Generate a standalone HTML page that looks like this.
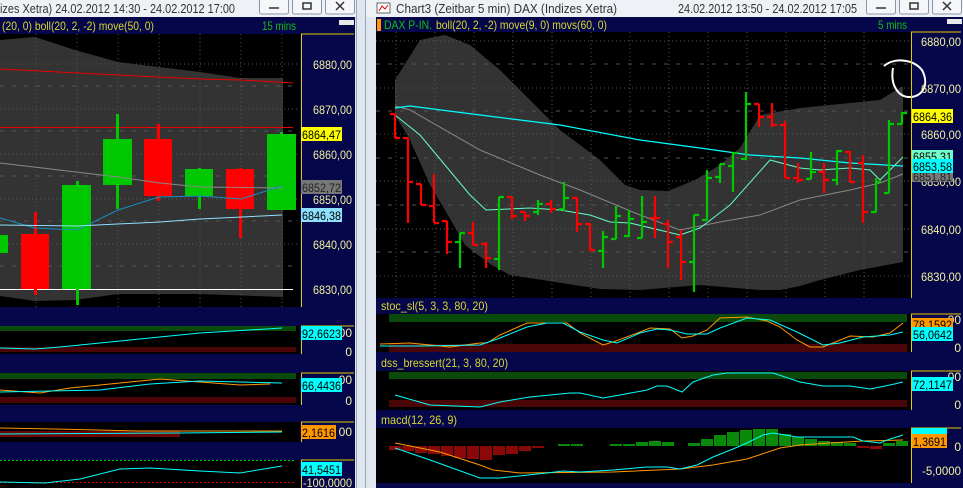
<!DOCTYPE html>
<html><head><meta charset="utf-8"><style>
html,body{margin:0;padding:0;background:#dde5ee;}
svg{display:block;font-family:"Liberation Sans",sans-serif;}
</style></head><body>
<svg width="963" height="488" viewBox="0 0 963 488" xmlns="http://www.w3.org/2000/svg">
<rect x="0" y="0" width="963" height="488" fill="#dfe6ef"/>
<rect x="0" y="0" width="356" height="17" fill="#eef2f7"/>
<rect x="366" y="0" width="597" height="17" fill="#eef2f7"/>
<line x1="356.5" y1="0" x2="356.5" y2="488" stroke="#9aa6b5"/>
<line x1="365.5" y1="0" x2="365.5" y2="488" stroke="#9aa6b5"/>
<text x="0" y="13" font-size="12.5" fill="#333" textLength="235" lengthAdjust="spacingAndGlyphs">izes Xetra) 24.02.2012 14:30 - 24.02.2012 17:00</text>
<g fill="#f4f6f9" stroke="#8a96a6">
<rect x="259.5" y="-2" width="29" height="16" rx="2"/><rect x="292.5" y="-2" width="29" height="16" rx="2"/><rect x="325.5" y="-2" width="29" height="16" rx="2"/>
<rect x="866.5" y="-2" width="29" height="16" rx="2"/><rect x="899.5" y="-2" width="29" height="16" rx="2"/><rect x="932.5" y="-2" width="29" height="16" rx="2"/>
</g>
<g stroke="#333" stroke-width="1.5" fill="none">
<line x1="269" y1="8" x2="279" y2="8"/><rect x="303" y="3" width="8" height="6"/><path d="M336 2 L344 10 M344 2 L336 10"/>
<line x1="876" y1="8" x2="886" y2="8"/><rect x="910" y="3" width="8" height="6"/><path d="M943 2 L951 10 M951 2 L943 10"/>
</g>
<rect x="377" y="3" width="13" height="10" fill="#fff" stroke="#666"/><path d="M379 11 L382 6 L385 9 L388 5" stroke="#d00" fill="none"/>
<text x="396" y="13" font-size="12.5" fill="#333" textLength="221" lengthAdjust="spacingAndGlyphs">Chart3 (Zeitbar 5 min)  DAX (Indizes Xetra)</text>
<text x="678" y="13" font-size="12.5" fill="#333" textLength="179" lengthAdjust="spacingAndGlyphs">24.02.2012 13:50 - 24.02.2012 17:05</text>

<!-- LEFT CHART -->
<rect x="0" y="17" width="355" height="471" fill="#06064a"/>
<rect x="0" y="34" width="300" height="273" fill="#000"/>
<text x="2" y="30" font-size="12" fill="#d8d830" textLength="152" lengthAdjust="spacingAndGlyphs">(20, 0) boll(20, 2, -2) move(50, 0)</text>
<text x="262" y="30" font-size="12" fill="#10c010" textLength="34" lengthAdjust="spacingAndGlyphs">15 mins</text>
<rect x="339" y="20" width="15" height="5" fill="#e8e8e8"/>
<polygon points="0,40 35,37 75,50 118,62 200,72 240,78 283,78 283,297 200,294 118,294 75,300 35,301 0,296" fill="#333"/>
<g stroke="#555" stroke-dasharray="1,3">
<path d="M36 34V307M77 34V307M118 34V307M159 34V307M200 34V307M241 34V307M282 34V307"/>
<path d="M0 64H300M0 109H300M0 154H300M0 199H300M0 244H300"/>
</g>
<g stroke="#555" stroke-dasharray="4,8"><path d="M0 86H300M0 131H300M0 176H300M0 221H300M0 266H300"/></g>
<line x1="0" y1="289.5" x2="293" y2="289.5" stroke="#fff"/>
<polyline points="0,69 118,75 200,79 240,80 293,83" stroke="#e00" fill="none"/>
<line x1="0" y1="127.5" x2="293" y2="127.5" stroke="#e00"/>
<g fill="#00c800"><rect x="0" y="235" width="8" height="18"/>
<rect x="76" y="181" width="3" height="124"/><rect x="62" y="185" width="29" height="104"/>
<rect x="116" y="114" width="3" height="95"/><rect x="103" y="139" width="29" height="46"/>
<rect x="198" y="168" width="3" height="41"/><rect x="185" y="169" width="28" height="27"/>
<rect x="280" y="132" width="3" height="4"/><rect x="267" y="134" width="29" height="76"/></g>
<g fill="#f00"><rect x="34" y="212" width="3" height="83"/><rect x="21" y="234" width="28" height="55"/>
<rect x="157" y="124" width="3" height="77"/><rect x="144" y="139" width="28" height="57"/>
<rect x="239" y="168" width="3" height="70"/><rect x="226" y="169" width="28" height="40"/></g>
<polyline points="0,163 118,177 160,183 200,187 282,188" stroke="#888" fill="none"/>
<polyline points="0,218 35,228 77,230 118,210 159,197 200,196 241,199 282,186" stroke="#1a8fc0" fill="none"/>
<polyline points="0,225 77,226 160,222 200,219 282,215" stroke="#8fe0ff" fill="none"/>
<path d="M301.5 34V307M301 34H354" stroke="#e8c800" fill="none"/>
<g font-size="12" fill="#f2f2a0">
<text x="313" y="69" textLength="39" lengthAdjust="spacingAndGlyphs">6880,00</text><text x="313" y="114" textLength="39" lengthAdjust="spacingAndGlyphs">6870,00</text><text x="313" y="159" textLength="39" lengthAdjust="spacingAndGlyphs">6860,00</text><text x="313" y="204" textLength="39" lengthAdjust="spacingAndGlyphs">6850,00</text><text x="313" y="249" textLength="39" lengthAdjust="spacingAndGlyphs">6840,00</text><text x="313" y="294" textLength="39" lengthAdjust="spacingAndGlyphs">6830,00</text></g>
<rect x="301" y="127" width="41" height="14" fill="#ff0"/><text x="302" y="139" font-size="12" fill="#000" textLength="39" lengthAdjust="spacingAndGlyphs">6864,47</text>
<rect x="301" y="180" width="41" height="14" fill="#777"/><text x="302" y="192" font-size="12" fill="#222" textLength="39" lengthAdjust="spacingAndGlyphs">6852,72</text>
<rect x="301" y="208" width="41" height="14" fill="#8fe0ff"/><text x="302" y="220" font-size="12" fill="#000" textLength="39" lengthAdjust="spacingAndGlyphs">6846,38</text>

<rect x="0" y="326" width="300" height="28" fill="#000"/>
<rect x="0" y="326" width="296" height="5" fill="#0a4a0a"/><rect x="0" y="347" width="296" height="5" fill="#4a0606"/>
<polyline points="0,348 35,349 60,347 120,341 200,333 282,328" stroke="#0ff" fill="none"/>
<rect x="0" y="373" width="300" height="32" fill="#000"/>
<rect x="0" y="373" width="296" height="6" fill="#0a4a0a"/><rect x="0" y="397" width="296" height="6" fill="#4a0606"/>
<polyline points="0,390 40,393 70,388 120,383 160,379 200,382 240,385 270,384" stroke="#ff9800" fill="none"/>
<polyline points="0,392 100,390 150,384 200,381 282,383" stroke="#0ff" fill="none"/>
<rect x="0" y="422" width="300" height="20" fill="#000"/>
<rect x="0" y="431" width="180" height="6" fill="#6a0606"/>
<polyline points="0,428 55,429 140,431 282,431" stroke="#ff9800" fill="none"/>
<polyline points="0,434 180,433 282,432" stroke="#0ff" fill="none"/>
<rect x="0" y="460" width="300" height="28" fill="#000"/>
<line x1="0" y1="460.5" x2="296" y2="460.5" stroke="#0c0" stroke-dasharray="2,2"/>
<line x1="0" y1="482.5" x2="296" y2="482.5" stroke="#d00" stroke-dasharray="2,2"/>
<polyline points="0,482 45,483 80,479 120,469 150,468 200,471 240,473 282,466" stroke="#0ff" fill="none"/>
<g stroke="#e8c800" fill="none"><path d="M301.5 326V354M301 326H354M301.5 373V405M301 373H354M301.5 422V442M301 422H354M301.5 460V488M301 460H354"/></g>
<g font-size="12" text-anchor="end" fill="#f2f2a0">
<text x="352" y="337">00</text><text x="352" y="356">0</text>
<text x="352" y="384">00</text><text x="352" y="405">0</text>
<text x="352" y="436">00</text></g>
<text x="303" y="487" font-size="12" fill="#f2f2a0" textLength="49" lengthAdjust="spacingAndGlyphs">-100,0000</text>
<rect x="301" y="326" width="41" height="14" fill="#0ff"/><text x="302" y="338" font-size="12" fill="#000" textLength="39" lengthAdjust="spacingAndGlyphs">92,6623</text>
<rect x="301" y="378" width="41" height="14" fill="#0ff"/><text x="302" y="390" font-size="12" fill="#000" textLength="39" lengthAdjust="spacingAndGlyphs">66,4436</text>
<rect x="301" y="425" width="35" height="14" fill="#ff9800"/><text x="302" y="437" font-size="12" fill="#000" textLength="33" lengthAdjust="spacingAndGlyphs">2,1616</text>
<rect x="301" y="462" width="41" height="14" fill="#0ff"/><text x="302" y="474" font-size="12" fill="#000" textLength="39" lengthAdjust="spacingAndGlyphs">41,5451</text>

<!-- RIGHT CHART -->
<rect x="376" y="17" width="587" height="471" fill="#06064a"/>
<rect x="376" y="32" width="535" height="266" fill="#000"/>
<rect x="377" y="19" width="4" height="12" fill="#ff9800"/>
<text x="384" y="29" font-size="12" fill="#10c010" textLength="48" lengthAdjust="spacingAndGlyphs">DAX P-IN.</text>
<text x="436" y="29" font-size="12" fill="#d8d830" textLength="171" lengthAdjust="spacingAndGlyphs">boll(20, 2, -2) move(9, 0) movs(60, 0)</text>
<text x="878" y="29" font-size="12" fill="#10c010" textLength="29" lengthAdjust="spacingAndGlyphs">5 mins</text>
<rect x="947" y="19" width="15" height="5" fill="#e8e8e8"/>
<polygon points="395,80 420,40 445,35 470,45 500,70 530,100 560,130 600,160 625,185 640,190 668,191 695,180 720,165 740,148 760,115 800,108 850,103 880,100 903,86 903,262 860,270 820,280 800,286 780,290 760,290 700,285 640,290 600,289 555,282 510,275 490,264 465,245 445,210 430,185 410,140 395,115" fill="#333"/>
<g stroke="#555" stroke-dasharray="1,3">
<path d="M396 32V298M435 32V298M474 32V298M513 32V298M552 32V298M591 32V298M630 32V298M669 32V298M708 32V298M747 32V298M786 32V298M825 32V298M864 32V298"/>
<path d="M376 41H911M376 88H911M376 134H911M376 181H911M376 229H911M376 276H911"/>
</g>
<g stroke="#555" stroke-dasharray="4,8"><path d="M376 64H911M376 111H911M376 158H911M376 205H911M376 252H911"/></g>
<polyline points="395,106 410,110 480,150 540,175 580,190 640,215 680,230 720,222 760,215 800,200 850,190 880,183 903,174" stroke="#888" fill="none"/>
<polyline points="395,108 410,106 480,115 560,125 640,140 700,148 750,155 800,158 850,163 903,166" stroke="#0ff" stroke-width="1.2" fill="none"/>
<polyline points="395,115 420,135 445,165 470,195 486,210 530,208 560,210 590,215 610,222 630,223 680,235 700,228 730,205 770,160 800,168 820,170 850,168 870,170 880,180 903,157" stroke="#60ffc0" fill="none"/>
<g stroke-width="2.2" fill="none">
<path stroke="#f00" d="M395 114V138M390 114H395M395 138H400
M408 138V223M403 138H408M408 182H413
M421 184V205M416 184H421M421 205H426
M434 174V223M429 206H434M434 223H439
M447 221V254M442 221H447M447 242H452
M473 222V245M468 233H473M473 245H478
M486 242V268M481 244H486M486 258H491
M512 197V219M507 197H512M512 216H517
M525 212V221M520 212H525M525 216H530
M551 200V213M546 204H551M551 209H556
M577 197V232M572 198H577M577 224H582
M590 223V251M585 224H590M590 250H595
M655 196V238M650 218H655M655 218H660
M668 220V268M663 224H668M668 242H673
M681 230V280M676 237H681M681 262H686
M759 104V127M754 104H759M759 117H764
M772 103V127M767 117H772M772 125H777
M785 121V178M780 125H785M785 178H790
M798 163V183M793 178H798M798 180H803
M824 163V193M819 172H824M824 180H829
M850 151V182M845 152H850M850 182H855
M863 155V223M858 163H863M863 212H868"/>
<path stroke="#00c800" d="M460 233V268M455 242H460M460 233H465
M499 197V270M494 259H499M499 197H504
M538 200V215M533 212H538M538 204H543
M564 182V211M559 209H564M564 198H569
M603 231V268M598 251H603M603 237H608
M616 206V239M611 239H616M616 216H621
M629 210V237M624 236H629M629 219H634
M642 196V238M637 238H642M642 222H647
M694 215V292M689 262H694M694 215H699
M707 170V220M702 220H707M707 178H712
M720 164V183M715 177H720M720 164H725
M733 152V192M728 166H733M733 153H738
M746 92V160M741 159H746M746 104H751
M811 152V179M806 179H811M811 172H816
M837 150V185M832 180H837M837 151H842
M876 178V212M871 212H876M876 182H881
M889 120V193M884 193H889M889 124H894
M902 112V124M897 124H902M902 113H907"/>
</g>
<path d="M884 66 C893 58 912 58 922 70 C930 85 922 98 908 97 C898 96 890 85 893 68" stroke="#fff" stroke-width="2" fill="none"/>
<path d="M911.5 32V298M911 32H961" stroke="#e8c800" fill="none"/>
<g font-size="12" fill="#f2f2a0">
<text x="921" y="46" textLength="40" lengthAdjust="spacingAndGlyphs">6880,00</text><text x="921" y="93" textLength="40" lengthAdjust="spacingAndGlyphs">6870,00</text><text x="921" y="139" textLength="40" lengthAdjust="spacingAndGlyphs">6860,00</text><text x="921" y="186" textLength="40" lengthAdjust="spacingAndGlyphs">6850,00</text><text x="921" y="234" textLength="40" lengthAdjust="spacingAndGlyphs">6840,00</text><text x="921" y="281" textLength="40" lengthAdjust="spacingAndGlyphs">6830,00</text></g>
<rect x="912" y="109" width="41" height="14" fill="#ff0"/><text x="913" y="121" font-size="12" fill="#000" textLength="39" lengthAdjust="spacingAndGlyphs">6864,36</text>
<rect x="912" y="150" width="41" height="13" fill="#70ffc8"/><text x="913" y="161" font-size="12" fill="#000" textLength="39" lengthAdjust="spacingAndGlyphs">6855,31</text>
<rect x="912" y="172" width="41" height="10" fill="#777"/><text x="913" y="181" font-size="12" fill="#222" textLength="39" lengthAdjust="spacingAndGlyphs">6851,81</text>
<rect x="912" y="159" width="41" height="14" fill="#0ff"/><text x="913" y="171" font-size="12" fill="#000" textLength="39" lengthAdjust="spacingAndGlyphs">6853,58</text>

<text x="381" y="310" font-size="12" fill="#d8d830" textLength="107" lengthAdjust="spacingAndGlyphs">stoc_sl(5, 3, 3, 80, 20)</text>
<rect x="376" y="314" width="535" height="38" fill="#000"/>
<rect x="389" y="314" width="518" height="8" fill="#0a4a0a"/><rect x="389" y="344" width="518" height="8" fill="#4a0606"/>
<polyline points="380,344 410,343 450,347 480,343 487,343 500,335 527,323 547,323 567,323 580,333 603,345 613,342 640,332 650,328 670,329 682,338 693,336 707,330 720,318 747,317 767,321 780,327 797,340 810,347 823,347 850,336 873,337 890,333 903,323" stroke="#ff9800" fill="none"/>
<polyline points="380,346 420,346 480,345 500,338 527,327 547,323 563,323 580,332 603,340 617,343 640,333 657,329 670,330 687,334 707,334 720,328 747,318 770,320 797,332 823,345 840,343 863,337 890,335 903,332" stroke="#0ff" fill="none"/>
<text x="381" y="367" font-size="12" fill="#d8d830" textLength="127" lengthAdjust="spacingAndGlyphs">dss_bressert(21, 3, 80, 20)</text>
<rect x="376" y="371" width="535" height="39" fill="#000"/>
<rect x="389" y="372" width="518" height="7" fill="#0a4a0a"/><rect x="389" y="400" width="518" height="7" fill="#4a0606"/>
<polyline points="395,395 430,405 480,407 500,402 530,397 570,393 580,393 603,398 620,395 647,390 657,386 667,386 682,392 693,382 713,375 727,373 773,373 800,382 823,386 850,386 870,389 890,385 903,382" stroke="#0ff" fill="none"/>
<text x="381" y="424" font-size="12" fill="#d8d830" textLength="76" lengthAdjust="spacingAndGlyphs">macd(12, 26, 9)</text>
<rect x="376" y="428" width="535" height="55" fill="#000"/>
<g fill="#8a0808">
<rect x="389" y="446" width="12" height="4"/><rect x="402" y="446" width="12" height="5"/><rect x="415" y="446" width="12" height="7"/><rect x="428" y="446" width="12" height="8"/><rect x="441" y="446" width="12" height="10"/><rect x="454" y="446" width="12" height="12"/><rect x="467" y="446" width="12" height="13"/><rect x="480" y="446" width="12" height="14"/><rect x="493" y="446" width="12" height="9"/><rect x="506" y="446" width="12" height="8"/><rect x="519" y="446" width="12" height="5"/><rect x="532" y="446" width="12" height="2"/><rect x="857" y="446" width="12" height="2"/><rect x="870" y="446" width="12" height="3"/></g>
<g fill="#0a8a0a">
<rect x="558" y="444" width="12" height="2"/><rect x="571" y="444" width="12" height="2"/><rect x="610" y="444" width="12" height="2"/><rect x="623" y="444" width="12" height="2"/><rect x="636" y="442" width="12" height="4"/><rect x="649" y="441" width="12" height="5"/><rect x="662" y="442" width="12" height="4"/><rect x="688" y="443" width="12" height="3"/><rect x="701" y="439" width="12" height="7"/><rect x="714" y="435" width="12" height="11"/><rect x="727" y="432" width="12" height="14"/><rect x="740" y="430" width="12" height="16"/><rect x="753" y="429" width="12" height="17"/><rect x="766" y="429" width="12" height="17"/><rect x="779" y="434" width="12" height="12"/><rect x="792" y="437" width="12" height="9"/><rect x="805" y="439" width="12" height="7"/><rect x="818" y="441" width="12" height="5"/><rect x="831" y="442" width="12" height="4"/><rect x="844" y="443" width="12" height="3"/><rect x="883" y="443" width="12" height="3"/><rect x="896" y="441" width="12" height="5"/></g>
<polyline points="395,443 440,452 480,465 493,470 520,473 613,472 680,469 713,465 747,459 780,448 800,445 830,443 863,441 903,440" stroke="#ff9800" fill="none"/>
<polyline points="395,448 430,460 480,478 500,478 547,473 563,471 580,472 613,470 647,467 667,467 680,469 697,465 713,457 733,449 747,443 763,435 773,433 797,437 830,437 853,437 863,441 880,443 890,439 903,435" stroke="#0ff" fill="none"/>
<g stroke="#e8c800" fill="none"><path d="M911.5 314V352M911 314H961M911.5 371V410M911 371H961M911.5 428V483M911 428H961"/></g>
<g font-size="12" text-anchor="end" fill="#f2f2a0">
<text x="961" y="324">00</text><text x="961" y="352">0</text>
<text x="961" y="381">00</text><text x="961" y="409">0</text>
<text x="961" y="451">0</text></g>
<text x="922" y="475" font-size="12" fill="#f2f2a0" textLength="39" lengthAdjust="spacingAndGlyphs">-5,0000</text>
<rect x="912" y="318" width="41" height="12" fill="#ff9800"/><text x="913" y="329" font-size="12" fill="#000" textLength="39" lengthAdjust="spacingAndGlyphs">78,1592</text>
<rect x="912" y="327" width="41" height="14" fill="#0ff"/><text x="913" y="339" font-size="12" fill="#000" textLength="39" lengthAdjust="spacingAndGlyphs">56,0642</text>
<rect x="912" y="377" width="41" height="14" fill="#0ff"/><text x="913" y="389" font-size="12" fill="#000" textLength="39" lengthAdjust="spacingAndGlyphs">72,1147</text>
<rect x="912" y="428" width="35" height="8" fill="#0ff"/>
<rect x="912" y="434" width="35" height="14" fill="#ff9800"/><text x="913" y="446" font-size="12" fill="#000" textLength="33" lengthAdjust="spacingAndGlyphs">1,3691</text>
</svg>
</body></html>
